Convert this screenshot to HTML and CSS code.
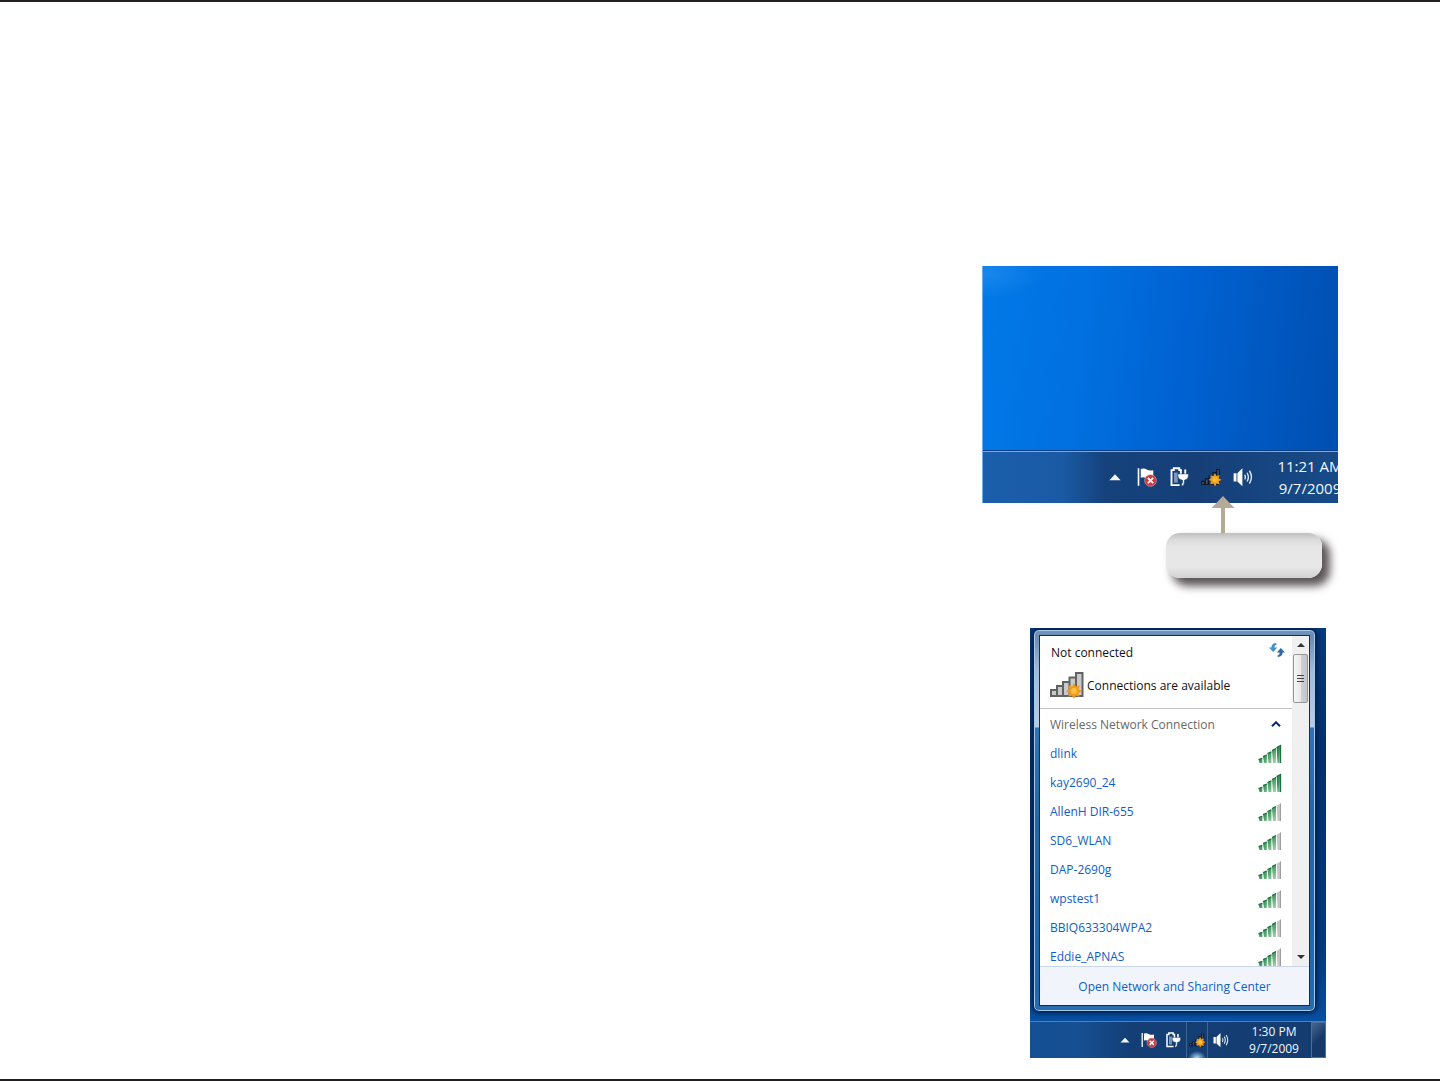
FILE: index.html
```html
<!DOCTYPE html>
<html lang="en">
<head>
<meta charset="utf-8">
<meta name="viewport" content="width=device-width, initial-scale=1">
<title>Connect to a Wireless Network</title>
<link rel="stylesheet" href="styles.css">
</head>
<body>
<svg width="0" height="0" class="defs" aria-hidden="true">
  <linearGradient id="green" x1="0" y1="0" x2="1" y2="1"><stop offset="0" stop-color="#1c7040"/><stop offset=".45" stop-color="#3a9159"/><stop offset="1" stop-color="#a5dbb2"/></linearGradient>
  <symbol id="up" viewBox="0 0 16 16"><path d="M3.500 10.500 8 5.800l4.500 4.700z" fill="#f4f8fc"/></symbol>
  <symbol id="flag" viewBox="0 0 16 16">
    <path d="M1.200 1v14" stroke="#fff" stroke-width="1.300"/>
    <path d="M3 1.500q3-1 5 .7 2.500 1 5 .3v7H8.500Q6 7.500 3 8.500z" fill="#fff"/>
    <circle cx="10.800" cy="10.800" r="4.700" fill="#c93a40" stroke="#e0a0a0" stroke-width=".5"/>
    <path d="M8.700 8.700l4.200 4.200m0-4.200-4.200 4.200" stroke="#fff" stroke-width="1.500"/>
  </symbol>
  <symbol id="power" viewBox="0 0 16 16">
    <path d="M8.500 14.500h-6.500v-12h1.800V1h4.400v1.500H10" fill="none" stroke="#fff" stroke-width="1.500"/>
    <path d="M4 4.500h3v8H4z" fill="#fff" opacity=".45"/>
    <path d="M9.500 2v4M13 2v4" stroke="#fff" stroke-width="1.500"/>
    <path d="M7.200 5.500h8.300V7q0 3-3.200 3.500v1.500q0 3-2.300 3.200v-1.600q.8-.2.800-1.600v-1.500Q7.200 10 7.200 7z" fill="#fff" stroke="#123a6b" stroke-width=".4"/>
  </symbol>
  <symbol id="spark" viewBox="0 0 16 16">
    <path d="M8 0l1.900 3.400L13.700 2.300 12.600 6.100 16 8l-3.400 1.900 1.100 3.800-3.800-1.100L8 16l-1.900-3.400-3.800 1.100 1.100-3.800L0 8l3.400-1.900-1.100-3.800 3.800 1.100z" fill="#f09c18"/><circle cx="8" cy="8" r="3" fill="#ffc040"/>
  </symbol>
  <symbol id="signal" viewBox="0 0 16 16">
    <g fill="#46536a" stroke="#0c1a2e" stroke-width=".9"><path d="M.5 11.500h2.200V14H.5zM3.500 9.500h2.200V14H3.500zM6.500 7h2.200v7H6.500zM9.500 4.500h2.200V14H9.500zM12.500 2h2.200v12h-2.200z"/></g>
    <use href="#spark" x="6" y="5" width="10.500" height="10.500"/>
  </symbol>
  <symbol id="sound" viewBox="0 0 16 16">
    <path d="M.5 5h2.300v6.500H.5zM3.500 5 7.500 1v14.300L3.500 11.500z" fill="#fff"/>
    <path d="M9.300 6.300q1.200 1.800 0 3.600M11.200 4.600q2.200 3.500 0 7M13.100 3q3.300 5 0 10.300" fill="none" stroke="#dce8f4" stroke-width="1.100"/>
  </symbol>
  <symbol id="b4" viewBox="0 0 24 20">
    <path d="M.5 15.500l3.800-1.200V19H1.500zM5 12.500l3.800-1.500v8H6zM9.500 9.500l3.900-1.700V19h-2.900zM14 6.500l4-1.900V19h-3z" fill="url(#green)"/>
    <path d="M.5 15.600l3.800-1.300M5 12.600l3.800-1.600M9.500 9.600l3.900-1.800M14 6.600l4-2" stroke="#17693a" stroke-width="1.100"/>
  </symbol>
  <symbol id="bars4" viewBox="0 0 24 20"><path d="M18.800 3.500l4-2V19h-3.300z" fill="#c4c4c4"/><path d="M22.500 1.500V19" stroke="#9d9d9d"/><use href="#b4"/></symbol>
  <symbol id="bars5" viewBox="0 0 24 20"><path d="M18.600 3.500l4.100-2V19h-3.200z" fill="url(#green)"/><path d="M18.600 3.500l4-2V19" fill="none" stroke="#17693a" stroke-width="1.100"/><use href="#b4"/></symbol>
</svg>
<main class="page">
  <div class="figures">
    <section class="desktop desktop-large">
      <div class="wallpaper"></div>
      <div class="taskbar">
        <button class="tray" aria-label="Show hidden icons"><svg><use href="#up"/></svg></button>
        <button class="tray" aria-label="Action Center"><svg><use href="#flag"/></svg></button>
        <button class="tray" aria-label="Power"><svg><use href="#power"/></svg></button>
        <button class="tray" aria-label="Network"><svg><use href="#signal"/></svg></button>
        <button class="tray" aria-label="Volume"><svg><use href="#sound"/></svg></button>
        <time class="clock">11:21 AM<br>9/7/2009</time>
      </div>
    </section>
    <div class="callout"><svg class="pointer" viewBox="0 0 24 37" aria-hidden="true"><path d="M12 0l11.500 12H14v25h-4V12H.5z" fill="#b5aa98"/></svg></div>
    <section class="desktop desktop-small">
      <div class="window">
        <div class="sheet">
          <div class="scroller">
            <div class="content">
              <header class="status">
                <div class="status-row"><span>Not connected</span>
                  <button class="refresh" aria-label="Refresh"><svg viewBox="0 0 16 14"><path d="M6.500 0C3.500.5 2.200 2.500 2.500 4.500H0L4.200 9l4-4.500H5.500Q5 2.500 8 1z" fill="#3f93c8"/><path d="M9.500 14c3-.5 4.300-2.500 4-4.500H16L11.800 5l-4 4.500h2.700q.5 2-2.500 3.500z" fill="#33699f"/></svg></button></div>
                <div class="available">
                  <svg viewBox="0 0 34 28" aria-hidden="true"><g fill="#c9c9c9" stroke="#626262" stroke-width="2"><path d="M1 19h6v6H1zM7 15h6v10H7zM13 11h6.500v14H13zM19.500 6.500H26V25h-6.500zM26 2h6.500v23H26z"/></g><use href="#spark" x="16" y="12" width="16" height="16"/></svg>
                  <span>Connections are available</span></div>
              </header>
              <div class="group"><span>Wireless Network Connection</span>
                <button class="collapse" aria-label="Collapse"><svg viewBox="0 0 10 6"><path d="M1 5.200 5 1.300l4 3.900" fill="none" stroke="#0d2a6b" stroke-width="2"/></svg></button></div>
              <ul class="networks">
                <li><a href="#">dlink</a><svg><use href="#bars5"/></svg></li>
                <li><a href="#">kay2690_24</a><svg><use href="#bars5"/></svg></li>
                <li><a href="#">AllenH DIR-655</a><svg><use href="#bars4"/></svg></li>
                <li><a href="#">SD6_WLAN</a><svg><use href="#bars4"/></svg></li>
                <li><a href="#">DAP-2690g</a><svg><use href="#bars4"/></svg></li>
                <li><a href="#">wpstest1</a><svg><use href="#bars4"/></svg></li>
                <li><a href="#">BBIQ633304WPA2</a><svg><use href="#bars4"/></svg></li>
                <li><a href="#">Eddie_APNAS</a><svg><use href="#bars4"/></svg></li>
              </ul>
            </div>
            <div class="scrollbar">
              <button class="step" aria-label="Scroll up"><svg viewBox="0 0 8 4"><path d="M0 4l4-4 4 4z" fill="#333"/></svg></button>
              <div class="thumb"><i></i><i></i><i></i></div>
              <button class="step step-down" aria-label="Scroll down"><svg viewBox="0 0 8 4"><path d="M0 0l4 4 4-4z" fill="#333"/></svg></button>
            </div>
          </div>
          <footer class="sharing"><a href="#">Open Network and Sharing Center</a></footer>
        </div>
      </div>
      <div class="taskbar">
        <button class="tray" aria-label="Show hidden icons"><svg><use href="#up"/></svg></button>
        <button class="tray" aria-label="Action Center"><svg><use href="#flag"/></svg></button>
        <button class="tray" aria-label="Power"><svg><use href="#power"/></svg></button>
        <button class="tray tray-active" aria-label="Network"><svg><use href="#signal"/></svg></button>
        <button class="tray" aria-label="Volume"><svg><use href="#sound"/></svg></button>
        <time class="clock">1:30 PM<br>9/7/2009</time>
        <button class="show-desktop" aria-label="Show desktop"></button>
      </div>
    </section>
  </div>
</main>
</body>
</html>
```
FILE: styles.css
```css
* { box-sizing: border-box; }
body { margin: 0; background: #fff; font-family: "Open Sans", "Noto Sans", sans-serif; font-size: 12px; }
button { padding: 0; border: 0; background: none; font: inherit; }
svg { display: block; }
a { text-decoration: none; color: #0f60c4; }
.defs { position: absolute; }

.page {
  display: flex;
  justify-content: flex-end;
  min-height: 100vh;
  padding: 264px 102px 21px 0;
  border-top: 2px solid #231f20;
  border-bottom: 2px solid #231f20;
}
.figures { width: 356px; }
.desktop { display: flex; flex-direction: column; overflow: hidden; }
.desktop-large {
  height: 237px;
  border-left: 1px solid #6aaef0;
  background:
    radial-gradient(ellipse 60px 24px at 0 8px, rgba(50, 150, 240, .5), transparent),
    linear-gradient(97deg, #0179e8 0%, #0170e0 28%, #0062d2 55%, #0056bd 82%, #004eb0 100%);
}
.wallpaper { flex: 1; }
.taskbar { display: flex; align-items: center; flex: none; color: #fff; }
.tray svg { display: block; width: 100%; height: 100%; }
.clock { flex: none; text-align: center; color: #f2f7fc; }

.desktop-large .taskbar {
  height: 53px;
  gap: 12px;
  padding-left: 122px;
  border-top: 1px solid #0a3f85;
  box-shadow: inset 0 1px #7fa8d8;
  background: linear-gradient(90deg, #1b5eab 0, #1a5aa5 80px, #15427c 122px, #163f77 60%, #174b88 100%);
}
.desktop-large .tray { flex: none; width: 20px; height: 20px; }
.desktop-large .clock { width: 90px; font-size: 15px; line-height: 22px; }

.callout {
  position: relative;
  width: 156px;
  height: 45px;
  margin: 30px 0 50px 184px;
  border-radius: 14px;
  background: linear-gradient(#bebebe 0, #dadada 14%, #e7e7e7 32%, #e7e7e7 75%, #d2d2d2 100%);
  box-shadow: 7px 7px 8px 1px #5b5557;
}
.pointer { position: absolute; left: 45px; bottom: 45px; width: 24px; height: 37px; }

.desktop-small {
  width: 296px;
  margin-left: 48px;
  background: linear-gradient(#063a7c 0, #02306e 30%, #033a80 75%, #0a57ae 97%);
}
.window {
  margin: 1px 10px 9px 3px;
  padding: 6px;
  border: 1px solid #0b2344;
  border-radius: 6px;
  background: linear-gradient(#7295bd 0, #6b8cb4 7px, #9fbbdb 40px, #b5cde8 97px, #2f74b8 98px, #2467a8 50%, #1f69b2 95%, #2b6dae 100%);
  box-shadow: inset 0 0 0 1px #a9c8e6, 0 0 5px 1px #001d48;
}
.sheet { background: #fff; box-shadow: 0 0 0 1px #102f57; }
.scroller { display: grid; grid-template-columns: 1fr 17px; height: 330px; overflow: hidden; }
.content { min-width: 0; height: 330px; overflow: hidden; }
.status { height: 73px; padding-left: 11px; border-bottom: 1px solid #c4c4c4; color: #111; }
.status-row { display: flex; align-items: center; justify-content: space-between; height: 33px; padding-right: 7px; }
.refresh svg { width: 16px; height: 14px; margin-bottom: 5px; }
.available { display: flex; align-items: center; gap: 3px; height: 32px; }
.available svg { width: 34px; height: 28px; margin-left: -1px; }
.group { display: flex; align-items: center; justify-content: space-between; height: 30px; padding: 0 11px 0 10px; color: #696969; }
.collapse svg { width: 10px; height: 6px; }
.networks { margin: 0; padding: 0; list-style: none; }
.networks li { display: flex; align-items: center; justify-content: space-between; height: 29px; padding: 0 10px; }
.networks svg { width: 24px; height: 20px; }
.scrollbar { display: flex; flex-direction: column; background: #f0f0f0; }
.step { display: flex; align-items: center; justify-content: center; flex: none; height: 18px; }
.step svg { width: 8px; height: 4px; }
.step-down { margin-top: auto; }
.thumb {
  display: flex; flex-direction: column; align-items: center; justify-content: center; gap: 2px;
  height: 49px; margin: 0 1px;
  border: 1px solid #959595; border-radius: 2px;
  background: linear-gradient(90deg, #f6f6f6, #e8e8ea 50%, #cfd0d4 55%, #c4c5c9);
}
.thumb i { width: 7px; height: 1px; background: #444; }
.sharing { display: flex; align-items: center; justify-content: center; height: 39px; border-top: 1px solid #c9d6e6; background: #f1f5fb; }

.desktop-small .taskbar {
  height: 37px;
  justify-content: flex-end;
  gap: 8px;
  border-top: 1px solid #4f7fb4;
  background: linear-gradient(90deg, #154f94 0, #164f92 50px, #133f76 100px, #143c70 100%);
}
.desktop-small .tray { flex: none; width: 16px; height: 16px; }
.desktop-small .tray-active {
  width: 22px; height: 36px; margin: 0 -3px; padding: 10px 2px;
  border: solid #3c6696; border-width: 0 1px;
  background: radial-gradient(ellipse 9px 7px at 50% 100%, #b4d8f6, transparent);
}
.desktop-small .clock { width: 74px; line-height: 17px; }
.show-desktop { width: 15px; height: 36px; margin-left: -8px; border: 1px solid #4d6f98; background: linear-gradient(135deg, #47678f, #17396a 50%, #15386a); }
```
